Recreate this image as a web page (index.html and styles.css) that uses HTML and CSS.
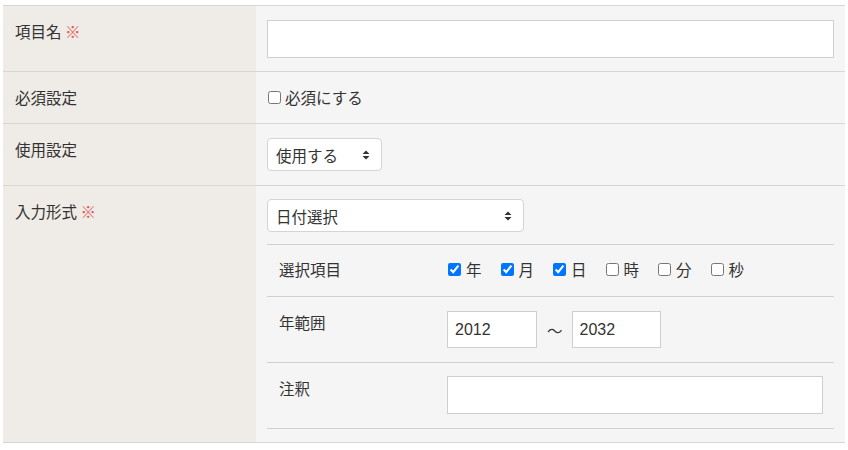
FILE: index.html
```html
<!DOCTYPE html>
<html lang="ja">
<head>
<meta charset="utf-8">
<title>項目設定</title>
<link rel="stylesheet" href="styles.css">
</head>
<body>
<table class="form">
  <tr class="row-name">
    <th>項目名 <span class="req">※</span></th>
    <td><input type="text" class="text full"></td>
  </tr>
  <tr class="row-required">
    <th>必須設定</th>
    <td><label class="check"><input type="checkbox"><span>必須にする</span></label></td>
  </tr>
  <tr class="row-use">
    <th>使用設定</th>
    <td>
      <div class="select sel-use">
        <select><option>使用する</option></select>
        <svg class="arrow" width="8" height="10" viewBox="0 0 8 10"><path d="M4 0.5L7.5 4H0.5Z M4 9.5L7.5 6H0.5Z" fill="#333"/></svg>
      </div>
    </td>
  </tr>
  <tr class="row-type">
    <th>入力形式 <span class="req">※</span></th>
    <td>
      <div class="select sel-type">
        <select><option>日付選択</option></select>
        <svg class="arrow" width="8" height="10" viewBox="0 0 8 10"><path d="M4 0.5L7.5 4H0.5Z M4 9.5L7.5 6H0.5Z" fill="#333"/></svg>
      </div>
      <table class="sub">
        <tr class="sub-check">
          <th>選択項目</th>
          <td>
            <div class="checks">
              <label class="check"><input type="checkbox" checked><span>年</span></label>
              <label class="check"><input type="checkbox" checked><span>月</span></label>
              <label class="check"><input type="checkbox" checked><span>日</span></label>
              <label class="check"><input type="checkbox"><span>時</span></label>
              <label class="check"><input type="checkbox"><span>分</span></label>
              <label class="check"><input type="checkbox"><span>秒</span></label>
            </div>
          </td>
        </tr>
        <tr>
          <th>年範囲</th>
          <td>
            <div class="range">
              <input type="text" class="text year" value="2012">
              <span class="tilde">～</span>
              <input type="text" class="text year" value="2032">
            </div>
          </td>
        </tr>
        <tr class="sub-note">
          <th>注釈</th>
          <td><input type="text" class="text note"></td>
        </tr>
      </table>
    </td>
  </tr>
</table>
</body>
</html>
```
FILE: styles.css
```css
html, body {
  margin: 0;
  padding: 0;
  background: #ffffff;
}
body {
  padding: 5px 3px 0 3px;
  font-family: "Noto Sans CJK JP", "Liberation Sans", sans-serif;
  font-size: 15.5px;
  color: #333333;
}
.form {
  width: 842px;
  border-collapse: collapse;
  border-top: 1px solid #d6d6d6;
}
.form > tbody > tr > th,
.form > tbody > tr > td {
  border-bottom: 1px solid #d6d6d6;
  vertical-align: top;
  text-align: left;
  font-weight: normal;
  line-height: 22px;
  padding: 14px 11px 13px 11px;
}
.form > tbody > tr > th {
  width: 253px;
  box-sizing: border-box;
  background: #efebe6;
  padding-left: 12px;
}
.form > tbody > tr > td {
  background: #f5f5f5;
}
.row-required > td, .row-required > th {
  padding-bottom: 15px !important;
}
.row-use > td {
  padding-bottom: 14px !important;
}
.row-type > td {
  padding-top: 13px !important;
}
.req {
  color: #e05a5a;
}
.text {
  box-sizing: border-box;
  border: 1px solid #cfcfcf;
  background: #fff;
  border-radius: 0;
  font-family: "Liberation Sans", "Noto Sans CJK JP", sans-serif;
  font-size: 16px;
  color: #333;
  padding: 0 7px;
  margin: 0;
  display: block;
  outline: none;
}
.full {
  width: 100%;
  height: 38px;
}
.check {
  display: flex;
  align-items: center;
  line-height: 22px;
  height: 22px;
}
.check input {
  margin: 0 5px 0 1px;
  width: 13px;
  height: 13px;
  accent-color: #0075ff;
}
.row-required .check input {
  margin-right: 4px;
}
.select {
  position: relative;
  height: 33px;
}
.select select {
  -webkit-appearance: none;
  appearance: none;
  box-sizing: border-box;
  width: 100%;
  height: 100%;
  border: 1px solid #d4d4d4;
  border-radius: 4px;
  background: #fff;
  font-family: "Noto Sans CJK JP", sans-serif;
  font-size: 15.5px;
  color: #333;
  padding: 0 24px 0 8px;
  margin: 0;
  outline: none;
}
.select .arrow {
  position: absolute;
  right: 12px;
  top: 12px;
}
.sel-use { width: 115px; }
.sel-type { width: 257px; }
.sub {
  width: 100%;
  border-collapse: collapse;
  border-top: 1px solid #d0d0d0;
  margin-top: 12px;
}
.sub th, .sub td {
  border-bottom: 1px solid #d0d0d0;
  vertical-align: top;
  text-align: left;
  font-weight: normal;
  line-height: 22px;
  padding: 14px 11px 14px 0;
}
.sub th {
  width: 181px;
  box-sizing: border-box;
  padding-left: 12px;
}
.sub-check th, .sub-check td {
  padding-top: 13px;
  padding-bottom: 16px;
}
.sub-note th, .sub-note td {
  padding-top: 13px;
  padding-bottom: 14px;
}
.sub-note th {
  padding-top: 14px;
}
.checks {
  display: flex;
  gap: 18px;
}
.range {
  display: flex;
  align-items: center;
}
.year {
  width: 90px;
  height: 37px;
}
.range .year:last-child { width: 89px; }
.tilde {
  margin: 0 9px 0 10px;
}
.note {
  width: 376px;
  height: 38px;
}
```
